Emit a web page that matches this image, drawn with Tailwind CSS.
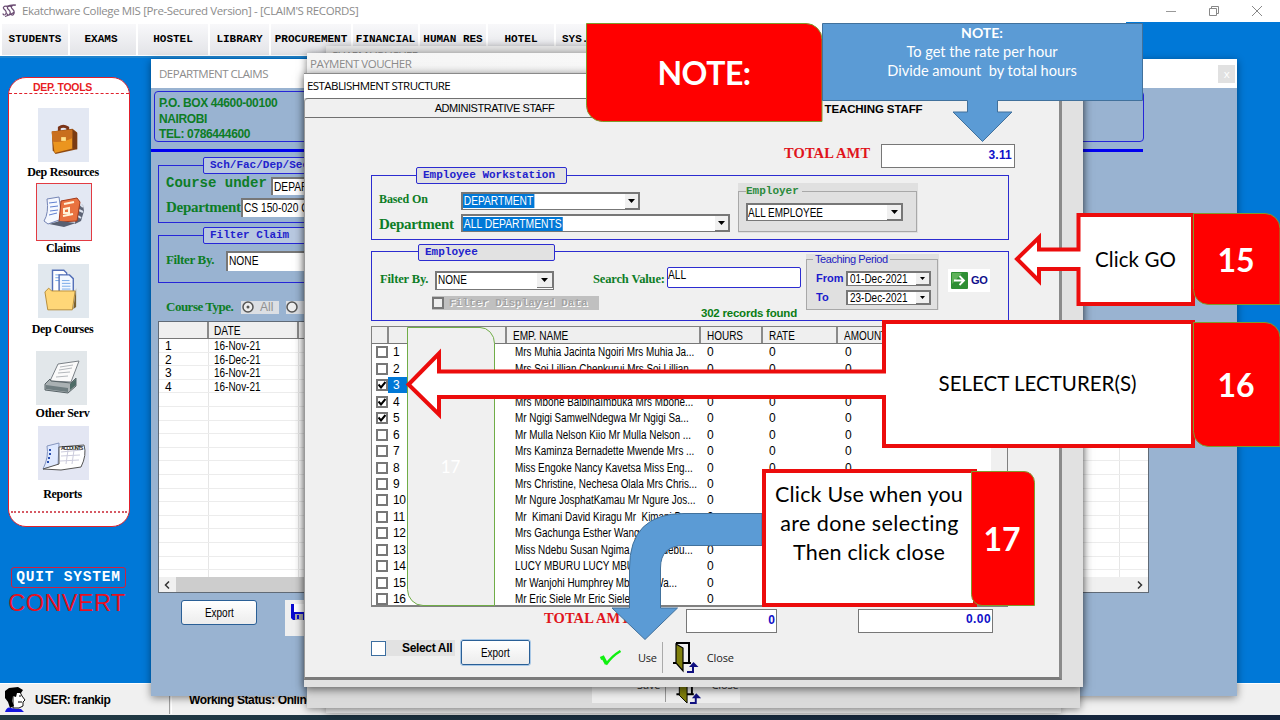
<!DOCTYPE html>
<html lang="en">
<head>
<meta charset="utf-8">
<title>Ekatchware College MIS</title>
<script src="https://cdn.jsdelivr.net/npm/@tailwindcss/browser@4"></script>
</head>
<body class="relative flex h-[720px] w-[1280px] flex-col overflow-hidden bg-white font-['Liberation_Sans',sans-serif] text-[12px] leading-none whitespace-nowrap text-black">

<!-- title bar -->
<header class="flex h-[22px] shrink-0 items-center bg-white pl-[2px] font-['Open_Sans',sans-serif] text-[11.5px] tracking-[-0.38px] text-[#8c8c8c]">
  <svg class="h-[14px] w-[15px]" viewBox="0 0 15 14" fill="none" stroke="#6b4c73" stroke-width="1.200"><path d="M5 2.500C2 1.500.5 3.500 2 5S5 7.500 4 9.500 1.500 11.500.8 9.500M9 2.500C6 1.500 4.500 3.500 6 5S9 7.500 8 9.500s-2.500 2-3.200 0M13.500 1.500C10 .5 8.500 3 10 4.500S13 7 12 9.500s-2.500 2-3.200 0M3 12.500q5-1 9.500-4.500M4 2.500q5-2 10-1.500"/></svg>
  <span class="ml-[5px]">Ekatchware College MIS [Pre-Secured Version] - [CLAIM'S RECORDS]</span>
  <div class="ml-auto flex items-center gap-[33px] pr-[18px]">
    <i class="block h-px w-[10px] bg-[#999]"></i>
    <svg class="h-[10px] w-[10px]" viewBox="0 0 10 10" fill="none" stroke="#888"><path d="M.5 2.500h7v7h-7zM2.500 2.500v-2h7v7h-2"/></svg>
    <svg class="h-[10px] w-[10px]" viewBox="0 0 10 10" fill="none" stroke="#888"><path d="M0 0l10 10M10 0L0 10"/></svg>
  </div>
</header>

<!-- toolbar -->
<nav class="flex h-[36px] shrink-0 bg-[#0078d7] font-['Liberation_Mono',monospace] text-[11px] font-bold">
  <div class="flex h-[36px] w-[1126px] gap-[2px] border-b-2 border-[#1f83cc] bg-white pt-[2px] pb-[1px] pl-[2px]">
    <span class="flex w-[66px] items-center justify-center bg-linear-to-b from-[#f8f8fa] to-[#e3e4e8]">STUDENTS</span>
    <span class="flex w-[66px] items-center justify-center bg-linear-to-b from-[#f8f8fa] to-[#e3e4e8] pr-[4px]">EXAMS</span>
    <span class="flex w-[70px] items-center justify-center bg-linear-to-b from-[#f8f8fa] to-[#e3e4e8]">HOSTEL</span>
    <span class="flex w-[59px] items-center justify-center bg-linear-to-b from-[#f8f8fa] to-[#e3e4e8]">LIBRARY</span>
    <span class="flex w-[80px] items-center justify-center bg-linear-to-b from-[#f8f8fa] to-[#e3e4e8]">PROCUREMENT</span>
    <span class="flex w-[65px] items-center justify-center bg-linear-to-b from-[#f8f8fa] to-[#e3e4e8]">FINANCIAL</span>
    <span class="flex w-[66px] items-center justify-center bg-linear-to-b from-[#f8f8fa] to-[#e3e4e8]">HUMAN RES</span>
    <span class="flex w-[66px] items-center justify-center bg-linear-to-b from-[#f8f8fa] to-[#e3e4e8]">HOTEL</span>
    <span class="flex w-[66px] items-center bg-linear-to-b from-[#f8f8fa] to-[#e3e4e8] pl-[6px]">SYS.</span>
  </div>
</nav>

<!-- workspace -->
<main class="flex h-[625px] shrink-0 bg-[#0078d7] pl-[8px]">
  <aside class="flex w-[122px] flex-col items-center pt-[19px] font-['Liberation_Serif',serif] text-[12px] font-bold tracking-[-0.3px]">
    <div class="flex h-[450px] w-[122px] flex-col items-center rounded-[18px] border border-[#e0202c] bg-white">
      <div class="flex h-[16px] w-full justify-center border-b border-dashed border-[#e0202c] pt-[4px] pr-[13px] font-['Liberation_Sans',sans-serif] text-[10.500px] tracking-[-0.3px] text-[#e81c24]">DEP. TOOLS</div>
      <div class="mt-[14px] mr-[11px] flex h-[54px] w-[51px] items-center justify-center bg-[#e3e8f3] pt-[8px]">
        <svg class="h-[32px] w-[30px]" viewBox="0 0 30 34"><path d="M10 9V5q4-3 9 0v4" fill="none" stroke="#7b3418" stroke-width="3"/><path d="M2 9l22-3 5 4v18L6 33 3 29z" fill="#8f4a12"/><path d="M2 10l22-2v19L5 32z" fill="#eb951f"/><path d="M2 9l22-2v9q-10 5-21 4z" fill="#c96f1e"/><path d="M24 7l5 4v17l-5-1z" fill="#7a3b12"/><rect x="12" y="15" width="5" height="4" fill="#ffe28a"/></svg>
      </div>
      <span class="mt-[4px] mr-[12px]">Dep Resources</span>
      <div class="mt-[5px] mr-[10px] flex h-[58px] w-[56px] items-center justify-center border border-[#e23b42] bg-[#e3e8f3]">
        <svg class="h-[34px] w-[44px]" viewBox="0 0 44 34"><path d="M5 4l12-2 3 22-14 5-4-3q5-8 3-22z" fill="#f5f8ff" stroke="#7585b5"/><path d="M7 8l8-1M8 12l8-1M8 16l8-1M7 20l8-2" stroke="#5f7fd0"/><path d="M34 8l7 2 1 6-3 10-6 3z" fill="#5d6475"/><path d="M38 9l3 3M37 15l4 2M36 21l3 2" stroke="#dfe4ee" stroke-width="2"/><path d="M19 6l16-3 3 4-3 19-18 1z" fill="#e9723f" stroke="#a33b1c"/><path d="M22 9l10-2M22 14l5-1v5h-5zM21 21l10-2" stroke="#fff3d8" stroke-width="2" fill="none"/><path d="M7 29l11-3 16 2-12 4z" fill="#596072"/></svg>
      </div>
      <span class="mt-px mr-[12px]">Claims</span>
      <div class="mt-[10px] mr-[11px] flex h-[54px] w-[51px] items-center justify-center bg-[#e1e8ee] pr-[6px] pb-[2px]">
        <svg class="h-[44px] w-[34px]" viewBox="0 0 36 44"><path d="M9 1h12l3 3v20H9z" fill="#fff" stroke="#5470b8" stroke-width="1.500"/><path d="M12 6h8M12 9h9M12 12h9" stroke="#74a8e8"/><path d="M16 6h11l4 4v14H16z" fill="#f2f8ff" stroke="#5470b8" stroke-width="1.500"/><path d="M19 12h8M19 15h9M19 18h9M19 21h9" stroke="#74a8e8"/><path d="M1 24l4-4 3 3 25 0-3 20H4z" fill="#ffd778" stroke="#b58a35"/><path d="M34 20l-3 22 3-2z" fill="#7a6130"/></svg>
      </div>
      <span class="mt-[5px] mr-[13px]">Dep Courses</span>
      <div class="mt-[16px] mr-[15px] flex h-[54px] w-[51px] items-center justify-center bg-[#e2e7ea]">
        <svg class="h-[36px] w-[38px]" viewBox="0 0 38 36"><path d="M15 4l21-3-8 21-21-1z" fill="#fafafa" stroke="#7a8086"/><path d="M17 7l13-2M16 10l13-2M15 13l12-1M13 17l12-1" stroke="#b4b8bc"/><path d="M2 24l5-5 1 2 20 2 5-5v8l-8 7L2 30z" fill="#aab1b3" stroke="#596468"/><path d="M3 25l22 3v4L3 29z" fill="#6f7d80"/><path d="M27 24l6-5v6l-6 5z" fill="#4d6b66"/></svg>
      </div>
      <span class="mt-[2px] mr-[13px]">Other Serv</span>
      <div class="mt-[7px] mr-[11px] flex h-[54px] w-[51px] items-center justify-center bg-[#e3e6f3] pt-[8px]">
        <svg class="h-[32px] w-[46px]" viewBox="0 0 46 32"><path d="M6 5l12-3-1 22-15 4q6-12 4-23z" fill="#dfe9ff" stroke="#8595be"/><path d="M8 9h2M8 13h2M7 17h2M6 21h2" stroke="#2a4fb0" stroke-width="2"/><path d="M18 6l25-2q3 10-3 22l-20 3-18-1 16-5z" fill="#fff" stroke="#555"/><path d="M20 11l20-2M20 15l19-1M19 20l19-1M27 9l-2 14M33 9l-2 14" stroke="#ccd"/><text x="20" y="9" font-family="Liberation Sans" font-size="5" font-weight="bold" fill="#222" textLength="22">ACCOUNTS</text></svg>
      </div>
      <span class="mt-[8px] mr-[13px]">Reports</span>
      <i class="mt-auto mb-[13px] block w-[116px] border-b-2 border-dotted border-[#d65a64]"></i>
    </div>
    <div class="mt-[40px] mr-px flex h-[21px] w-[115px] shrink-0 items-center justify-center rounded-[3px] border border-[#d02040] font-['Liberation_Mono',monospace] text-[14.500px] tracking-[0.800px] text-white">QUIT SYSTEM</div>
    <span class="mt-[4px] mr-[4px] font-['Liberation_Sans',sans-serif] text-[23.500px] leading-[22px] font-normal tracking-[0.400px] text-[#e81020]">CONVERT</span>
  </aside>
</main>

<!-- status bar -->
<footer class="flex h-[32px] shrink-0 items-center border-t border-white bg-[#f0f0f0] text-[12px] font-bold tracking-[-0.4px]">
  <svg class="ml-[4px] h-[25px] w-[23px]" viewBox="0 0 23 25"><path d="M9 5h7l2 4 3 4-2 2v4l-4 2H9z" fill="#fff" stroke="#111"/><path d="M1 4l4-3 9-1 5 3-2 3h-4l-1 4-3-1-1 5 2 5-4 2-2-6-3-4z" fill="#000"/><path d="M1 25q2-6 6-4l5 1h5l3 3z" fill="#1616e0"/><path d="M15 9h2M14 15h4" stroke="#000"/></svg>
  <span class="ml-[8px] w-[134px]">USER: frankip</span>
  <i class="block h-[28px] w-[3px] border-r border-l border-r-white border-l-[#a0a0a0]"></i>
  <span class="ml-[17px]">Working Status: Online</span>
</footer>
<div class="h-[5px] shrink-0 bg-linear-to-r from-[#223b44] to-[#14233c]"></div>

<!-- Department claims window -->
<section class="absolute top-[59px] left-[151px] flex h-[637px] w-[1086px] flex-col bg-[#99b3d1] shadow-[0_2px_8px_rgba(0,0,0,0.45)]">
  <div class="flex h-[29px] shrink-0 items-center justify-between bg-white pr-[2px] pl-[8px] font-['Open_Sans',sans-serif] text-[11.500px] tracking-[-0.5px] text-[#8c8c8c]">DEPARTMENT CLAIMS<span class="flex h-[18px] w-[17px] items-center justify-center bg-[#e1e1e1] text-white">x</span></div>
  <div class="mt-[3px] ml-[3px] flex h-[51px] w-[990px] shrink-0 flex-col rounded-[4px] border border-[#2626d8] pt-[4px] pl-[4px] leading-[15.500px] font-bold tracking-[-0.38px] text-[#0d7d26]">
    <span>P.O. BOX 44600-00100</span><span>NAIROBI</span><span>TEL: 0786444600</span>
  </div>
  <i class="mt-[7px] block h-[3px] w-[992px] shrink-0 bg-[#0000f0]"></i>
  <div class="mt-[13px] ml-[7px] flex h-[58px] w-[900px] shrink-0 flex-col border border-[#2626d8] pl-[7px]">
    <span class="mt-[-9px] ml-[37px] flex h-[17px] w-[180px] shrink-0 items-center rounded-[2px] border border-[#2626d8] bg-[#b8c8e0] pl-[6px] font-['Liberation_Mono',monospace] text-[11px] font-bold text-[#2222cc]">Sch/Fac/Dep/Sec</span>
    <div class="mt-[2px] flex h-[19px] items-center"><span class="w-[105px] pb-[6px] font-['Liberation_Mono',monospace] text-[14px] font-bold text-[#0d7d26]">Course under</span><span class="h-[18px] w-[200px] border-t-2 border-l-2 border-[#777] bg-white pt-[2px] pl-px"><span class="inline-block origin-left scale-x-[.85]">DEPARTMENT</span></span></div>
    <div class="mt-[3px] flex h-[19px] items-center"><span class="w-[75px] font-['Liberation_Serif',serif] text-[15px] font-bold tracking-[-0.28px] text-[#0d7d26]">Department</span><span class="h-[19px] w-[200px] border-t-2 border-l-2 border-[#777] bg-white pt-[2px] pl-px"><span class="inline-block origin-left scale-x-[.85]">CS 150-020 COMPUTER</span></span></div>
  </div>
  <div class="mt-[12px] ml-[7px] flex h-[48px] w-[900px] shrink-0 flex-col border border-[#2626d8] pl-[7px]">
    <span class="mt-[-9px] ml-[37px] flex h-[17px] w-[180px] shrink-0 items-center rounded-[2px] border border-[#2626d8] bg-[#b8c8e0] pl-[6px] font-['Liberation_Mono',monospace] text-[11px] font-bold text-[#2222cc]">Filter Claim</span>
    <div class="mt-[7px] flex h-[20px] items-center"><span class="w-[60px] pb-[4px] font-['Liberation_Serif',serif] text-[13px] font-bold tracking-[-0.35px] text-[#0d7d26]">Filter By.</span><span class="h-[20px] w-[200px] border-t-2 border-l-2 border-[#777] bg-white pt-[2px] pl-px"><span class="inline-block origin-left scale-x-[.85]">NONE</span></span></div>
  </div>
  <div class="mt-[17px] ml-[15px] flex h-[14px] shrink-0 items-center">
    <span class="w-[75px] pb-px font-['Liberation_Serif',serif] text-[13px] font-bold tracking-[-0.5px] text-[#0d7d26]">Course Type.</span>
    <span class="flex h-[13px] w-[38px] items-center gap-[6px] bg-[#dcdfe4] pl-px text-[#909090]"><svg class="h-[12px] w-[12px]" viewBox="0 0 12 12"><circle cx="6" cy="6" r="5" fill="#eee" stroke="#555" stroke-width="1.500"/><circle cx="6" cy="6" r="1.500" fill="#555"/></svg>All</span>
    <span class="ml-[7px] flex h-[13px] w-[60px] items-center bg-[#dcdfe4]"><svg class="h-[12px] w-[12px]" viewBox="0 0 12 12"><circle cx="6" cy="6" r="5" fill="#eee" stroke="#555" stroke-width="1.500"/></svg></span>
  </div>
  <div class="mt-[7px] ml-[7px] flex h-[272px] w-[991px] shrink-0 flex-col border border-[#606a76] bg-white">
    <div class="flex h-[17px] shrink-0 border-b border-[#777] bg-[#efefef]">
      <i class="w-[50px] border-r-2 border-[#8a8a8a]"></i><span class="w-[90px] border-r-2 border-[#8a8a8a] pt-[3px] pl-[5px]"><span class="inline-block origin-left scale-x-[.85]">DATE</span></span>
    </div>
    <div id="claims" class="flex h-[238px] flex-col overflow-hidden"></div>
    <div class="flex h-[15px] items-center bg-[#f0f0f0] px-[5px]">
      <svg class="h-[8px] w-[6px]" viewBox="0 0 6 8" fill="none" stroke="#333" stroke-width="1.500"><path d="M5 .5L1.500 4 5 7.500"/></svg>
      <i class="ml-[6px] block h-[15px] w-[700px] bg-[#cdcdcd]"></i>
      <svg class="ml-auto h-[8px] w-[6px]" viewBox="0 0 6 8" fill="none" stroke="#333" stroke-width="1.500"><path d="M1 .5L4.500 4 1 7.500"/></svg>
    </div>
  </div>
  <div class="mt-[7px] ml-[30px] flex">
    <span class="flex h-[25px] w-[76px] items-center justify-center rounded-[3px] border border-[#2a5f96] bg-linear-to-b from-white to-[#ececec]"><span class="scale-x-[.83]">Export</span></span>
    <span class="ml-[28px] flex h-[36px] w-[70px] bg-[#efefef] pt-[4px] pl-[6px]"><svg class="h-[16px] w-[16px]" viewBox="0 0 16 16"><path d="M0 0h16v16H2l-2-2z" fill="#0a0ad0"/><path d="M3 0h10v8H3z" fill="#fff"/><path d="M4 10h8v6H4z" fill="#aaa"/><path d="M6 11h2v4H6z" fill="#0a0ad0"/></svg></span>
  </div>
</section>

<!-- windows stacked behind the structure dialog -->
<section class="absolute top-[46px] left-[326px] h-[667px] w-[735px] bg-[#e6e6e6] bg-linear-to-b from-[#e4e4e4] to-[#e6e6e6] pt-[4px] pl-[5px] font-['Open_Sans',sans-serif] text-[11.500px] tracking-[-0.75px] text-[#8c8c8c] shadow-[0_1px_8px_rgba(0,0,0,0.35)]">CHARM VOUCHER</section>
<section class="absolute top-[53px] left-[307px] flex h-[655px] w-[773px] flex-col bg-[#dadada] shadow-[0_1px_8px_rgba(0,0,0,0.5)]">
  <div class="flex h-[22px] items-center bg-white bg-linear-to-r from-[#f4f4f4] to-white pl-[3px] font-['Open_Sans',sans-serif] text-[11.500px] tracking-[-0.5px] text-[#8c8c8c]">PAYMENT VOUCHER</div>
  <div class="mt-auto mb-[5px] ml-[285px] flex h-[24px] w-[148px] items-center bg-[#ededed] pl-[45px] font-['Open_Sans',sans-serif] text-[11px] tracking-[-0.1px] text-[#333]">
    <span class="pb-[14px]">Save</span><i class="ml-[5px] block h-[22px] w-px bg-[#999]"></i>
    <svg class="ml-[10px] h-[30px] w-[26px] -translate-y-[2px]" viewBox="0 0 26 31"><path d="M3 1h13v20M0 21h18" fill="none" stroke="#000" stroke-width="2"/><path d="M3 1l8 5v24l-8-8z" fill="#80800c" stroke="#000"/><path d="M14 30h6v-6" fill="none" stroke="#101080" stroke-width="2"/><path d="M16 25l4.500-5 5 5z" fill="#101080"/></svg>
    <span class="ml-[9px] pb-[14px]">Close</span>
  </div>
</section>

<!-- Establishment structure dialog -->
<section class="absolute top-[73px] left-[304px] flex h-[614px] w-[779px] flex-col bg-[#e1e1e1] shadow-[0_2px_9px_rgba(0,0,0,0.6)]">
  <div class="flex h-[25px] shrink-0 items-center border-t border-[#8a8a8a] bg-white pl-[3px] font-['Open_Sans',sans-serif] text-[11.500px] tracking-[-0.560px]">ESTABLISHMENT STRUCTURE</div>
  <div class="flex h-[582px] w-[758px] flex-col rounded-tl-[4px] border-t border-r-[3px] border-b-[3px] border-l border-t-[#707070] border-r-[#8a8a8a] border-b-[#7a7a7a] border-l-[#999] bg-[#f0f0f0]">
    <div class="flex h-[19px] shrink-0">
      <span class="flex w-[378px] items-center justify-center border-b border-[#707070] pl-[2px] text-[11px] tracking-[-0.45px]">ADMINISTRATIVE STAFF</span>
      <span class="flex w-[378px] items-center justify-center pt-[2px] pl-[6px] text-[11.500px] font-bold tracking-[-0.1px]">TEACHING STAFF</span>
    </div>
    <div class="mt-[26px] flex h-[24px] shrink-0 pl-[479px]">
      <span class="w-[97px] pt-[2px] font-['Liberation_Serif',serif] text-[14.500px] font-bold tracking-[0.1px] text-[#e0141c]">TOTAL AMT</span>
      <span class="h-[24px] w-[134px] border border-[#777] bg-white pt-[4px] pr-[2px] text-right font-bold tracking-[0.2px] text-[#1010c8]">3.11</span>
    </div>

    <!-- workstation group -->
    <div class="mt-[7px] ml-[66px] flex h-[65px] w-[638px] shrink-0 border border-[#2c2cd0]">
      <div class="flex w-[366px] flex-col pl-[7px]">
        <span class="mt-[-9px] ml-[37px] flex h-[17px] w-[151px] shrink-0 items-center rounded-[2px] border border-[#2c2cd0] bg-[#e2e2e2] pl-[6px] font-['Liberation_Mono',monospace] text-[11px] font-bold text-[#2222cc]">Employee Workstation</span>
        <div class="mt-[7px] flex h-[19px] items-center">
          <span class="w-[82px] pb-[4px] font-['Liberation_Serif',serif] text-[12px] font-bold tracking-[-0.1px] text-[#0d7d26]">Based On</span>
          <span class="flex h-[18px] w-[179px] items-center justify-between border border-t-2 border-l-2 border-[#777] bg-white"><b class="origin-left scale-x-[.85] bg-[#0078d7] px-px py-px font-normal text-white">DEPARTMENT</b><i class="flex h-full w-[14px] items-center justify-center border-r border-b border-[#777] bg-[#f0f0f0]"><svg class="h-[4px] w-[7px]" viewBox="0 0 7 4"><path d="M0 0h7L3.500 4z"/></svg></i></span>
        </div>
        <div class="mt-[4px] flex h-[18px] items-center">
          <span class="w-[82px] pt-[2px] font-['Liberation_Serif',serif] text-[15px] font-bold tracking-[-0.28px] text-[#0d7d26]">Department</span>
          <span class="flex h-[18px] w-[269px] items-center justify-between border border-t-2 border-l-2 border-[#777] bg-white"><b class="origin-left scale-x-[.86] bg-[#0078d7] px-px py-px font-normal text-white">ALL DEPARTMENTS</b><i class="flex h-full w-[14px] items-center justify-center border-r border-b border-[#777] bg-[#f0f0f0]"><svg class="h-[4px] w-[7px]" viewBox="0 0 7 4"><path d="M0 0h7L3.500 4z"/></svg></i></span>
        </div>
      </div>
      <div class="mt-[7px] flex h-[50px] w-[180px] flex-col bg-[#e0e0e0] pt-[8px] pr-px">
        <div class="flex h-[41px] flex-col border border-[#a8a8a8] pl-[7px]">
          <span class="mt-[-6px] h-[12px] w-[56px] shrink-0 bg-[#e0e0e0] font-['Liberation_Mono',monospace] text-[11px] font-bold text-[#2c8a3c]">Employer</span>
          <span class="mt-[5px] flex h-[18px] w-[157px] items-center justify-between border border-t-2 border-l-2 border-[#777] bg-white"><span class="origin-left scale-x-[.83]">ALL EMPLOYEE</span><i class="flex h-full w-[15px] items-center justify-center border-r border-b border-[#777] bg-[#f0f0f0]"><svg class="h-[4px] w-[7px]" viewBox="0 0 7 4"><path d="M0 0h7L3.500 4z"/></svg></i></span>
        </div>
      </div>
    </div>

    <!-- employee group -->
    <div class="mt-[11px] ml-[66px] flex h-[70px] w-[638px] shrink-0 border border-[#2c2cd0]">
      <div class="flex w-[220px] flex-col pl-[8px]">
        <span class="mt-[-8px] ml-[38px] flex h-[17px] w-[137px] shrink-0 items-center rounded-[2px] border border-[#2c2cd0] bg-[#e2e2e2] pl-[6px] font-['Liberation_Mono',monospace] text-[11px] font-bold text-[#2222cc]">Employee</span>
        <div class="mt-[9px] flex h-[20px] items-center">
          <span class="w-[55px] pb-[2px] font-['Liberation_Serif',serif] text-[12.500px] font-bold tracking-[-0.15px] text-[#0d7d26]">Filter By.</span>
          <span class="flex h-[19px] w-[119px] items-center justify-between border border-t-2 border-l-2 border-[#777] bg-white pb-px pl-px"><span class="origin-left scale-x-[.83]">NONE</span><i class="flex h-full w-[16px] items-center justify-center border-r border-b border-[#777] bg-[#f0f0f0]"><svg class="h-[4px] w-[7px]" viewBox="0 0 7 4"><path d="M0 0h7L3.500 4z"/></svg></i></span>
        </div>
        <span class="mt-[6px] ml-[52px] flex h-[14px] w-[167px] shrink-0 items-center bg-[#c0c0c0] font-['Liberation_Mono',monospace] text-[11px] font-bold text-[#a4a4a4] text-shadow-[1px_1px_0_#fff]"><i class="mr-[5px] block h-[12px] w-[12px] border-2 border-[#777] bg-[#eee]"></i>Filter Displayed Data</span>
      </div>
      <div class="flex w-[210px] flex-col">
        <div class="mt-[15px] flex h-[21px]">
          <span class="w-[75px] pt-[6px] pl-px font-['Liberation_Serif',serif] text-[12.500px] font-bold tracking-[-0.15px] text-[#0d7d26]">Search Value:</span>
          <span class="h-[21px] w-[134px] rounded-[2px] border border-[#2c2cd0] bg-white pt-px"><span class="inline-block origin-left scale-x-[.85]">ALL</span></span>
        </div>
        <span class="mt-[20px] ml-[109px] text-[11.500px] font-bold tracking-[-0.22px] text-[#0b7d14]">302 records found</span>
      </div>
      <div class="mt-[2px] ml-[4px] flex h-[56px] w-[133px] flex-col bg-[#e0e0e0] pt-[5px] pr-px">
        <div class="flex h-[51px] flex-col border border-[#a8a8a8]">
          <span class="mt-[-6px] ml-[6px] h-[12px] w-[77px] shrink-0 bg-[#e0e0e0] pl-[2px] text-[11px] tracking-[-0.42px] text-[#2020c0]">Teaching Period</span>
          <div class="mt-[4px] flex h-[16px] items-center pl-[9px]"><b class="w-[30px] text-[11px] text-[#1a1acc]">From</b><span class="flex h-[15px] w-[85px] items-center justify-between border border-t-2 border-l-2 border-[#777] bg-white pl-[2px]"><span class="w-[60px] origin-left scale-x-[.83]">01-Dec-2021</span><i class="flex h-full w-[14px] items-center justify-center border-r border-b border-[#777] bg-[#f0f0f0]"><svg class="h-[3px] w-[5px]" viewBox="0 0 7 4"><path d="M0 0h7L3.500 4z"/></svg></i></span></div>
          <div class="mt-[3px] flex h-[16px] items-center pl-[9px]"><b class="w-[30px] text-[11px] text-[#1a1acc]">To</b><span class="flex h-[15px] w-[85px] items-center justify-between border border-t-2 border-l-2 border-[#777] bg-white pl-[2px]"><span class="w-[60px] origin-left scale-x-[.83]">23-Dec-2021</span><i class="flex h-full w-[14px] items-center justify-center border-r border-b border-[#777] bg-[#f0f0f0]"><svg class="h-[3px] w-[5px]" viewBox="0 0 7 4"><path d="M0 0h7L3.500 4z"/></svg></i></span></div>
        </div>
      </div>
      <div class="mt-[17px] ml-[9px] flex h-[23px] w-[42px] items-center gap-[3px] bg-white pl-[3px] text-[11px] font-bold tracking-[-0.4px] text-[#10108c]"><svg class="h-[17px] w-[17px] shrink-0" viewBox="0 0 17 17"><rect width="17" height="17" rx="1" fill="#2f8f34"/><path d="M1 1h10L1 12z" fill="#5fb35a"/><path d="M3 8.500h10M8.500 4l4.500 4.500L8.500 13" fill="none" stroke="#fff" stroke-width="1.800"/></svg>GO</div>
    </div>

    <!-- employee list -->
    <div class="mt-[5px] ml-[66px] flex h-[281px] w-[637px] shrink-0 flex-col overflow-hidden border-t border-r border-b-2 border-l border-[#808080] bg-white">
      <div class="flex h-[17px] shrink-0 items-end border-b border-[#777] bg-[#efefef]">
        <i class="h-full w-[17px] border-r-2 border-[#8a8a8a]"></i><i class="h-full w-[118px] border-r-2 border-[#8a8a8a]"></i>
        <span class="h-full w-[194px] border-r-2 border-[#8a8a8a] pt-[3px] pl-[6px]"><span class="inline-block origin-left scale-x-[.84]">EMP. NAME</span></span>
        <span class="h-full w-[62px] border-r-2 border-[#8a8a8a] pt-[3px] pl-[6px]"><span class="inline-block origin-left scale-x-[.83]">HOURS</span></span>
        <span class="h-full w-[75px] border-r-2 border-[#8a8a8a] pt-[3px] pl-[6px]"><span class="inline-block origin-left scale-x-[.83]">RATE</span></span>
        <span class="h-full w-[90px] border-r-2 border-[#8a8a8a] pt-[3px] pl-[6px]"><span class="inline-block origin-left scale-x-[.83]">AMOUNT</span></span>
      </div>
      <div class="flex">
        <div id="staff" class="flex w-[619px] flex-col"></div>
        <i class="block w-[16px] bg-[#f0f0f0]"></i>
      </div>
    </div>

    <div class="mt-[2px] flex h-[24px] shrink-0 pl-[239px]">
      <span class="w-[142px] pt-[2px] font-['Liberation_Serif',serif] text-[14.500px] font-bold tracking-[0.1px] text-[#e0141c]">TOTAL AMT</span>
      <span class="h-[24px] w-[91px] border border-[#777] bg-white pt-[4px] pr-px text-right font-bold text-[#1010c8]">0</span>
      <span class="ml-[81px] h-[24px] w-[135px] border border-[#777] bg-white pt-[3px] pr-px text-right font-bold tracking-[0.4px] text-[#1010c8]">0.00</span>
    </div>

    <div class="flex h-[40px] shrink-0 pt-[7px] pl-[66px]">
      <div class="flex h-[16px] w-[90px] items-center"><i class="block h-[15px] w-[15px] border border-[#3c6ea0] bg-white"></i><b class="flex h-[16px] w-[69px] items-center bg-[#e2e2e2] pl-[16px] text-[12px] tracking-[-0.34px]">Select All</b></div>
      <span class="flex h-[25px] w-[69px] items-center justify-center rounded-[2px] border border-[#2a5f96] bg-linear-to-b from-white to-[#ececec] outline-1 outline-[#a9c8e6]"><span class="scale-x-[.83]">Export</span></span>
      <svg class="mt-[10px] ml-[69px] h-[17px] w-[23px]" viewBox="0 0 23 17" fill="none" stroke="#10f010"><path d="M1.500 8.500l2.500-1 3.500 6.500" stroke-width="3.500"/><path d="M7 14.500Q13 6 21.500 1" stroke-width="2.400"/></svg>
      <span class="mt-[12px] ml-[16px] font-['Open_Sans',sans-serif] text-[11px] tracking-[-0.2px] text-[#222]">Use</span>
      <i class="mt-[2px] ml-[5px] block h-[31px] w-px bg-[#aaa]"></i>
      <svg class="mt-[2px] ml-[10px] h-[32px] w-[26px]" viewBox="0 0 26 32"><path d="M3 1h13v20M0 21h18" fill="none" stroke="#000" stroke-width="2"/><path d="M3 2l7 4v23l-7-8z" fill="#80800c" stroke="#000" stroke-width="1.200"/><path d="M14 30h6v-6" fill="none" stroke="#101080" stroke-width="2"/><path d="M16 25l4.500-5 5 5z" fill="#101080"/></svg>
      <span class="mt-[12px] ml-[8px] font-['Open_Sans',sans-serif] text-[11px] tracking-[-0.15px] text-[#222]">Close</span>
    </div>
  </div>
</section>

<!-- annotation shapes -->
<svg class="absolute inset-0 h-[720px] w-[1280px]" viewBox="0 0 1280 720" stroke-miterlimit="10">
  <path d="M407.500 327.500H480a14.500 16 0 0 1 14.500 16V605.500H423a15.500 16 0 0 1-15.500-16z" fill="#f0f0f0" stroke="#70ad47"/>
  <path d="M762 513.500H684Q629.500 513.500 629.500 568V608H612L645 639.500 677.500 608H660.500V568Q660.500 545.500 684 545.500H762z" fill="#5b9bd5" stroke="#41719c"/>
  <path d="M884 322H1193V446H884V397H439V414.500L408.500 384.500 439 353.500V371.500H884z" fill="#fff" stroke="#ec0c0c" stroke-width="4"/>
  <path d="M1078.500 215H1193V304H1078.500V269H1039V281L1017 259 1039 237.500V249.500H1078.500z" fill="#fff" stroke="#ec0c0c" stroke-width="4"/>
  <path d="M764 471H975V605H764z" fill="#fff" stroke="#ec0c0c" stroke-width="4"/>
  <g fill="red" stroke="#7f9a2c">
    <path d="M586.500 23.500H806a16 16 0 0 1 16 16V121.500H602.500a16 16 0 0 1-16-16z"/>
    <path d="M1193.500 213.500H1265a15 15 0 0 1 15 15V304.500H1208.500a15 15 0 0 1-15-15z"/>
    <path d="M1193.500 322.500H1265a15 15 0 0 1 15 15V446.500H1208.500a15 15 0 0 1-15-15z"/>
    <path d="M971.500 471.500H1024a10.500 11 0 0 1 10.500 11V605.500H982a10.500 11 0 0 1-10.500-11z"/>
  </g>
  <path d="M822.500 23.500H1142.500V100.500H997.500V112H1012L982.500 141.500 953 112H967.500V100.500H822.500z" fill="#5b9bd5" stroke="#41719c"/>
</svg>
<div class="absolute top-[327px] left-[407px] flex h-[278px] w-[87px] items-center justify-center font-['Lato',sans-serif] text-[17px] text-white">17</div>
<div class="absolute top-[23px] left-[586px] flex h-[99px] w-[236px] items-center justify-center font-['Lato',sans-serif] text-[32px] font-bold tracking-[-0.5px] text-white">NOTE:</div>
<div class="absolute top-[23px] left-[822px] flex h-[76px] w-[320px] flex-col items-center font-['Lato',sans-serif] text-[14.600px] leading-[19px] text-white"><b class="text-[14px]">NOTE:</b><span>To get the rate per hour</span><span class="whitespace-pre">Divide amount  by total hours</span></div>
<div class="absolute top-[215px] left-[1079px] flex h-[88px] w-[113px] items-center justify-center font-['Lato',sans-serif] text-[20.500px] tracking-[0.1px]">Click GO</div>
<div class="absolute top-[321px] left-[883px] flex h-[124px] w-[309px] items-center justify-center font-['Lato',sans-serif] text-[20.500px]">SELECT LECTURER(S)</div>
<div class="absolute top-[480px] left-[766px] flex w-[206px] flex-col items-center font-['Lato',sans-serif] text-[21.500px] leading-[29px] tracking-[0.2px]"><span>Click Use when you</span><span class="pl-px tracking-[0.4px]">are done selecting</span><span>Then click close</span></div>
<div class="absolute top-[215px] left-[1193px] flex h-[90px] w-[86px] items-center justify-center font-['Lato',sans-serif] text-[32px] font-bold text-white">15</div>
<div class="absolute top-[323px] left-[1193px] flex h-[124px] w-[86px] items-center justify-center font-['Lato',sans-serif] text-[32px] font-bold text-white">16</div>
<div class="absolute top-[472px] left-[971px] flex h-[134px] w-[62px] items-center justify-center font-['Lato',sans-serif] text-[32px] font-bold text-white">17</div>

<script>
const dates = ['16-Nov-21', '16-Dec-21', '16-Nov-21', '16-Nov-21'];
document.getElementById('claims').innerHTML = Array.from({ length: 18 }, (_, i) => `
  <div class="flex h-[13.600px] shrink-0 border-b border-[#ececec]">
    <span class="w-[50px] border-r border-[#e6e6e6] pt-px pl-[6px]">${i < 4 ? i + 1 : ''}</span>
    <span class="w-[90px] border-r border-[#e6e6e6] pt-px pl-[5px]"><span class="block origin-left scale-x-[.83]">${dates[i] || ''}</span></span>
    <i class="w-[821px] border-r border-[#e6e6e6]"></i>
  </div>`).join('');

const staff = [
  'Mrs Muhia Jacinta Ngoiri Mrs Muhia Ja...', 'Mrs Soi Lillian Chepkurui Mrs Soi Lillian...', 'Mr Kamau Peter Mr Kamau Peter',
  'Mrs Mbone BalbinaImbuka Mrs Mbone...', 'Mr Ngigi SamwelNdegwa Mr Ngigi Sa...', 'Mr Mulla Nelson Kiio Mr Mulla Nelson ...',
  'Mrs Kaminza Bernadette Mwende Mrs ...', 'Miss Engoke Nancy Kavetsa Miss Eng...', 'Mrs Christine, Nechesa Olala Mrs Chris...',
  'Mr Ngure JosphatKamau Mr Ngure Jos...', 'Mr  Kimani David Kiragu Mr  Kimani Da...', 'Mrs Gachunga Esther Wangui Mrs Ga...',
  'Miss Ndebu Susan Ngima Miss Ndebu...', 'LUCY MBURU LUCY MBURU', 'Mr Wanjohi Humphrey Mbui Mr Wa...', 'Mr Eric Siele Mr Eric Siele'];
document.getElementById('staff').innerHTML = staff.map((name, i) => {
  const on = i >= 2 && i <= 4;
  const tick = on ? '<svg class="h-[8px] w-[8px]" viewBox="0 0 8 8" fill="none" stroke="#000" stroke-width="2"><path d="M.5 3.500L3 6.500 7.500 1"/></svg>' : '';
  const num = i === 2 ? 'bg-[#0078d7] text-white' : '';
  return `
  <div class="flex h-[16.470px] items-center">
    <i class="ml-[4px] flex h-[12px] w-[12px] items-center justify-center border-2 border-[#777] bg-white">${tick}</i>
    <span class="flex h-full w-[19px] items-center pl-[5px] tracking-[-0.3px] ${num}">${i + 1}</span>
    <span class="ml-[108px] w-[192px]"><span class="inline-block origin-left scale-x-[.825] whitespace-pre">${name}</span></span>
    <span class="w-[62px]">0</span><span class="w-[76px]">0</span><span>0</span>
  </div>`;
}).join('');
</script>
</body>
</html>
